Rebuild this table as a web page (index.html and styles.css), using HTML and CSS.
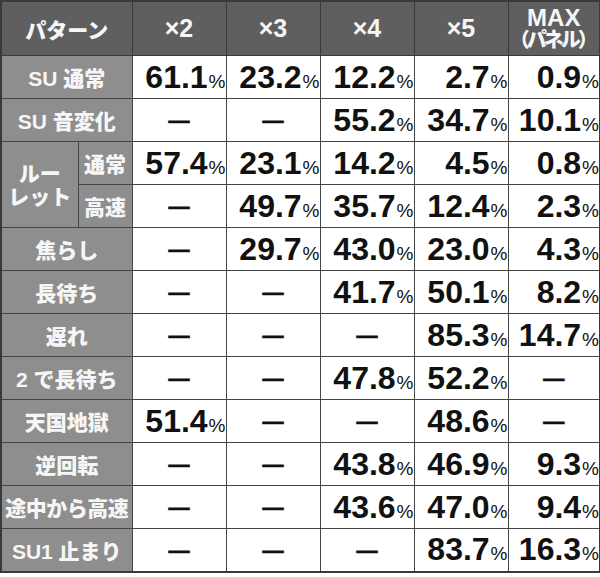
FILE: index.html
```html
<!DOCTYPE html>
<html lang="ja">
<head>
<meta charset="utf-8">
<link rel="stylesheet" href="styles.css">
</head>
<body>
<table class="tbl">
  <colgroup>
    <col class="c-a"><col class="c-b"><col class="c-n"><col class="c-n"><col class="c-n"><col class="c-n"><col class="c-m">
  </colgroup>
  <thead>
    <tr class="hrow">
      <th colspan="2" class="jp">パターン</th>
      <th>×2</th><th>×3</th><th>×4</th><th>×5</th>
      <th class="maxh"><span class="mx">MAX</span><span class="pn">（パネル）</span></th>
    </tr>
  </thead>
  <tbody>
    <tr>
      <th colspan="2">SU 通常</th>
      <td>61.1<small>%</small></td><td>23.2<small>%</small></td><td>12.2<small>%</small></td><td>2.7<small>%</small></td><td>0.9<small>%</small></td>
    </tr>
    <tr>
      <th colspan="2">SU 音変化</th>
      <td class="d">—</td><td class="d">—</td><td>55.2<small>%</small></td><td>34.7<small>%</small></td><td>10.1<small>%</small></td>
    </tr>
    <tr>
      <th rowspan="2" class="roul">ルー<br>レット</th>
      <th class="sub">通常</th>
      <td>57.4<small>%</small></td><td>23.1<small>%</small></td><td>14.2<small>%</small></td><td>4.5<small>%</small></td><td>0.8<small>%</small></td>
    </tr>
    <tr>
      <th class="sub">高速</th>
      <td class="d">—</td><td>49.7<small>%</small></td><td>35.7<small>%</small></td><td>12.4<small>%</small></td><td>2.3<small>%</small></td>
    </tr>
    <tr>
      <th colspan="2">焦らし</th>
      <td class="d">—</td><td>29.7<small>%</small></td><td>43.0<small>%</small></td><td>23.0<small>%</small></td><td>4.3<small>%</small></td>
    </tr>
    <tr>
      <th colspan="2">長待ち</th>
      <td class="d">—</td><td class="d">—</td><td>41.7<small>%</small></td><td>50.1<small>%</small></td><td>8.2<small>%</small></td>
    </tr>
    <tr>
      <th colspan="2">遅れ</th>
      <td class="d">—</td><td class="d">—</td><td class="d">—</td><td>85.3<small>%</small></td><td>14.7<small>%</small></td>
    </tr>
    <tr>
      <th colspan="2">2 で長待ち</th>
      <td class="d">—</td><td class="d">—</td><td>47.8<small>%</small></td><td>52.2<small>%</small></td><td class="d">—</td>
    </tr>
    <tr>
      <th colspan="2">天国地獄</th>
      <td>51.4<small>%</small></td><td class="d">—</td><td class="d">—</td><td>48.6<small>%</small></td><td class="d">—</td>
    </tr>
    <tr>
      <th colspan="2">逆回転</th>
      <td class="d">—</td><td class="d">—</td><td>43.8<small>%</small></td><td>46.9<small>%</small></td><td>9.3<small>%</small></td>
    </tr>
    <tr>
      <th colspan="2" class="tight">途中から高速</th>
      <td class="d">—</td><td class="d">—</td><td>43.6<small>%</small></td><td>47.0<small>%</small></td><td>9.4<small>%</small></td>
    </tr>
    <tr>
      <th colspan="2">SU1 止まり</th>
      <td class="d">—</td><td class="d">—</td><td class="d">—</td><td>83.7<small>%</small></td><td>16.3<small>%</small></td>
    </tr>
  </tbody>
</table>
</body>
</html>
```

FILE: styles.css
```css
html, body {
  margin: 0;
  padding: 0;
  background: #ffffff;
}

.tbl {
  border-collapse: collapse;
  table-layout: fixed;
  width: 598px;
  border: 2px solid #3a3a3a;
  font-family: "Liberation Sans", "Noto Sans CJK JP", sans-serif;
}

.c-a { width: 77px; }
.c-b { width: 54px; }
.c-n { width: 94px; }
.c-m { width: 92px; }

.tbl th, .tbl td {
  border: 1px solid #444444;
  padding: 0;
}

.hrow th {
  height: 53px;
  background: #5f5f5f;
  color: #f6f6f6;
  font-size: 25px;
  font-weight: bold;
  text-align: center;
  vertical-align: middle;
  border-color: #3a3a3a;
}

.hrow th.jp {
  font-size: 21px;
  font-weight: 900;
}

.maxh .mx {
  display: block;
  font-size: 24px;
  line-height: 22px;
  padding-top: 1px;
}
.maxh .pn {
  display: block;
  font-size: 20px;
  line-height: 22px;
  font-weight: 900;
  letter-spacing: -3px;
  margin-left: -3px;
}

tbody tr {
  height: 43px;
}

tbody th {
  background: #8e8e8e;
  color: #f6f6f6;
  font-size: 21px;
  font-weight: 900;
  text-align: center;
  vertical-align: middle;
  white-space: nowrap;
  border-color: #444444;
}

tbody th.tight {
  letter-spacing: -0.5px;
}

tbody th.roul {
  line-height: 23px;
}

tbody td {
  background: #ffffff;
  color: #111111;
  font-size: 32px;
  font-weight: bold;
  text-align: right;
  vertical-align: middle;
  padding: 2px 3px 0 0;
  white-space: nowrap;
  border-color: #555555;
}

tbody td small {
  font-size: 19px;
  font-weight: normal;
  margin-left: 1px;
}

tbody td.d {
  text-align: center;
  font-size: 21px;
  padding: 0;
  -webkit-text-stroke: 0.7px #111111;
}
```
